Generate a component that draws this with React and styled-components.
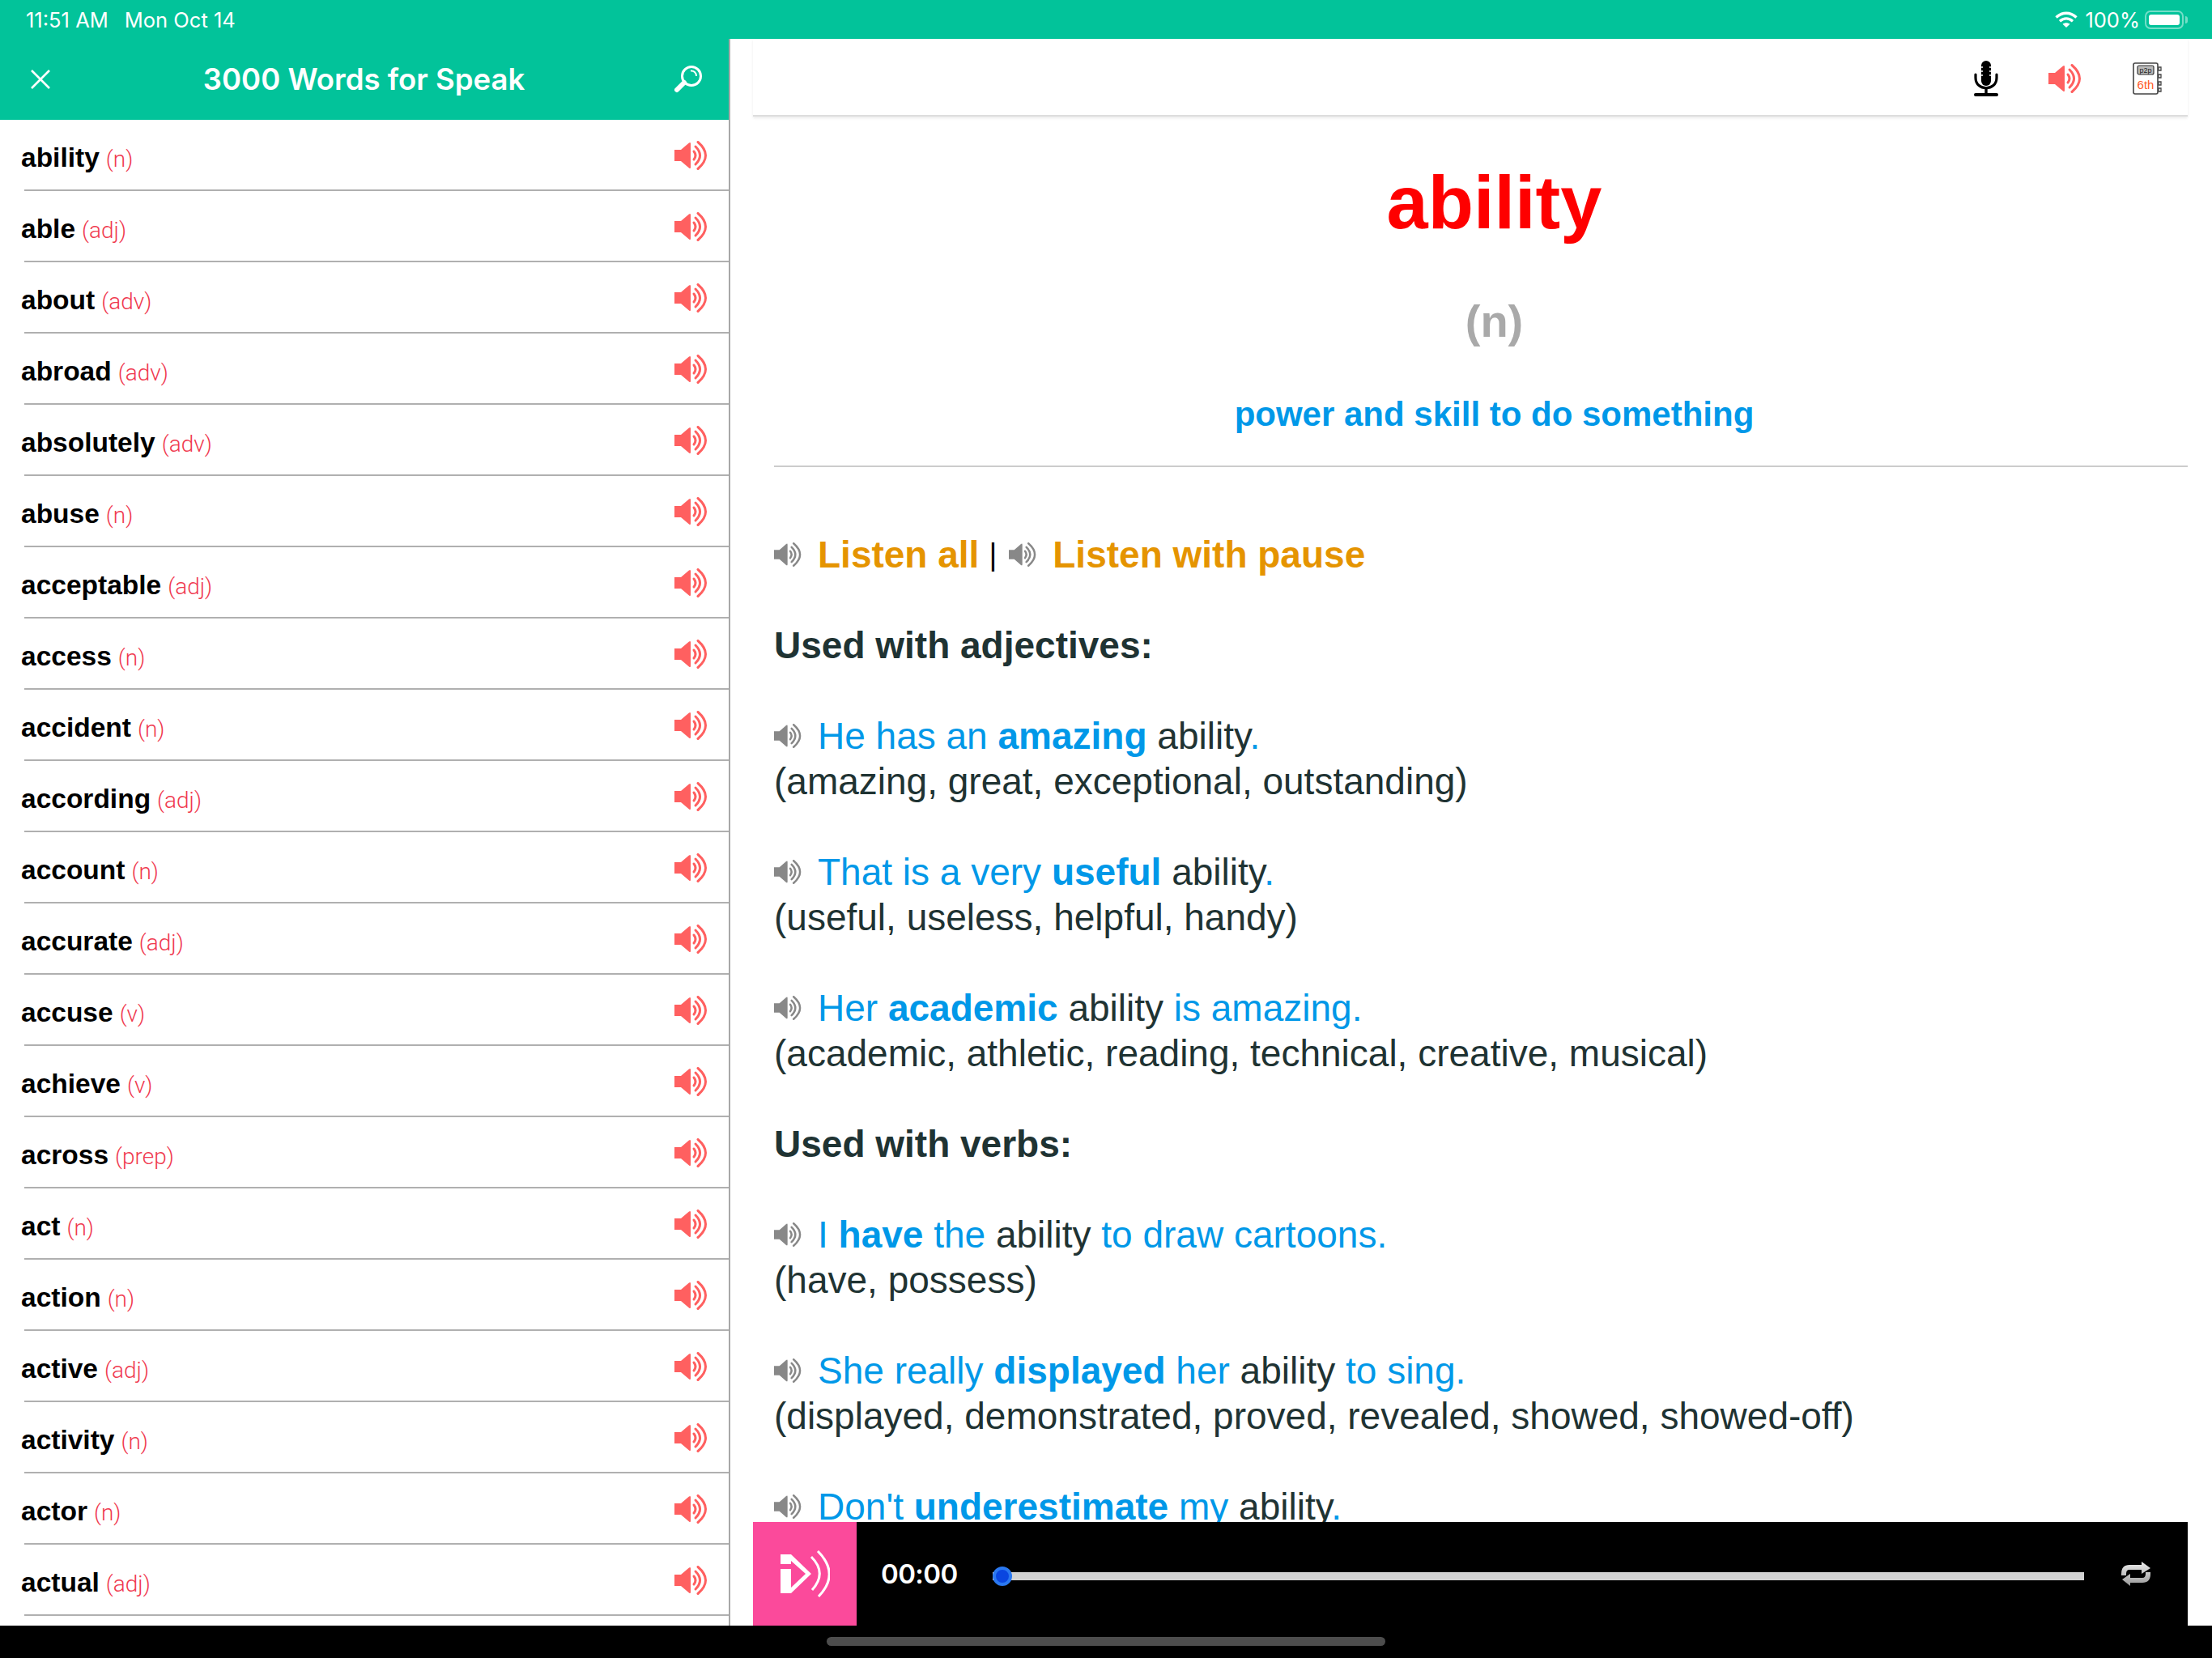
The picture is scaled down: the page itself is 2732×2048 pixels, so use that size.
import React from 'react'
import styled, { createGlobalStyle } from 'styled-components'

const Global = createGlobalStyle`
  html, body { margin: 0; padding: 0; background: #000; }
  * { box-sizing: border-box; }
`

const Page = styled.div`
  width: 2732px;
  height: 2048px;
  display: flex;
  flex-direction: column;
  overflow: hidden;
  background: #000;
  font-family: 'Liberation Sans', Arial, sans-serif;
`

const StatusBar = styled.div`
  height: 48px;
  flex: none;
  display: flex;
  align-items: center;
  justify-content: space-between;
  padding: 0 30px 0 32px;
  background: #02c39a;
  color: #fff;
  font-family: 'Inter', sans-serif;
  font-size: 25.5px;
`
const StatusGroup = styled.div`
  display: flex;
  align-items: center;
  gap: ${p => p.$gap || 9}px;
`

const Battery = styled.div`
  width: 48px;
  height: 23px;
  padding: 3px;
  margin-left: -3px;
  margin-right: 5px;
  border: 2px solid rgba(255, 255, 255, .45);
  border-radius: 7px;
  position: relative;
  &:before {
    content: '';
    display: block;
    height: 100%;
    background: #fff;
    border-radius: 3px;
  }
  &:after {
    content: '';
    position: absolute;
    right: -7px;
    top: 5px;
    width: 3px;
    height: 9px;
    background: rgba(255, 255, 255, .45);
    border-radius: 0 3px 3px 0;
  }
`

const Main = styled.div`
  flex: 1;
  min-height: 0;
  display: flex;
  background: #fff;
`

const Sidebar = styled.div`
  width: 902px;
  flex: none;
  display: flex;
  flex-direction: column;
  overflow: hidden;
  border-right: 2px solid #a8a8a8;
`

const SideHeader = styled.div`
  height: 100px;
  flex: none;
  display: flex;
  align-items: center;
  padding: 0 32px 0 38px;
  background: #02c39a;
  color: #fff;
`
const SideTitle = styled.div`
  flex: 1;
  text-align: center;
  font-family: 'Inter', sans-serif;
  font-weight: 600;
  font-size: 36.5px;
  padding-left: 4px;
`

const Row = styled.div`
  height: 88px;
  flex: none;
  margin-left: 30px;
  padding: 2px 25px 0 0;
  display: flex;
  align-items: center;
  justify-content: space-between;
  border-bottom: 2px solid #b0b0b0;
`
const RowWord = styled.div`
  margin-left: -4px;
  padding-top: 6px;
  font-size: 33.5px;
  font-weight: 700;
  color: #000;
  white-space: nowrap;
`
const Pos = styled.span`
  margin-left: 8px;
  font-family: 'Roboto', sans-serif;
  font-weight: 300;
  font-size: 28px;
  color: #f03a50;
`

const Detail = styled.div`
  flex: 1;
  min-width: 0;
  display: flex;
  flex-direction: column;
  padding: 0 30px 0 28px;
`

const Toolbar = styled.div`
  height: 96px;
  flex: none;
  display: flex;
  align-items: center;
  justify-content: flex-end;
  gap: 62px;
  padding: 4px 32px 0 0;
  border-bottom: 2px solid #ddd;
  box-shadow: 0 2px 3px rgba(0, 0, 0, .08);
`

const Content = styled.div`
  flex: 1;
  min-height: 0;
  overflow: hidden;
  padding-left: 26px;
`

const Title = styled.div`
  padding-left: 33px;
  text-align: center;
`
const Word = styled.div`
  margin-top: 53px;
  font-size: 92px;
  line-height: 106px;
  font-weight: 700;
  color: #fe0000;
`
const WordPos = styled.div`
  margin-top: 62px;
  font-size: 56px;
  line-height: 64px;
  font-weight: 700;
  color: #a9a9a9;
`
const Meaning = styled.div`
  margin-top: 55px;
  font-size: 42px;
  line-height: 56px;
  font-weight: 700;
  color: #0098e8;
`
const Rule = styled.div`
  margin-top: 35px;
  height: 2px;
  background: #ccc;
`

const ListenRow = styled.div`
  margin-top: 80px;
  margin-bottom: 56px;
  display: flex;
  align-items: center;
  height: 56px;
  font-size: 46px;
  font-weight: 700;
  color: #e59400;
`
const Sep = styled.span`
  margin: 0 15px 0 12px;
  font-size: 38px;
  font-weight: 400;
  color: #000;
`
const GraySpeaker = styled.span`
  display: inline-flex;
  margin-right: 19px;
  vertical-align: 1px;
`
const Heading = styled.div`
  margin-bottom: 56px;
  font-size: 46px;
  line-height: 56px;
  font-weight: 700;
  color: #1f3333;
`
const Example = styled.div`
  margin-bottom: 56px;
  font-size: 46px;
  line-height: 56px;
  color: #1f3333;
  white-space: nowrap;
`
const Sentence = styled.div`
  color: #0098e8;
  b { font-weight: 700; }
  i { font-style: normal; color: #1f3333; }
`

const Player = styled.div`
  height: 128px;
  flex: none;
  display: flex;
  align-items: center;
  background: #000;
  color: #fff;
`
const PlayButton = styled.div`
  width: 128px;
  height: 128px;
  flex: none;
  display: flex;
  align-items: center;
  justify-content: center;
  background: #fb4a9b;
`
const Time = styled.div`
  width: 93px;
  flex: none;
  margin: 0 45px 0 30px;
  font-family: 'Inter', sans-serif;
  font-weight: 600;
  font-size: 33px;
  letter-spacing: -.6px;
  white-space: nowrap;
`
const Track = styled.div`
  flex: 1;
  height: 10px;
  margin-top: 6px;
  background: #d2d2d2;
  position: relative;
`
const Thumb = styled.div`
  position: absolute;
  left: 0;
  top: -7px;
  width: 24px;
  height: 24px;
  border-radius: 50%;
  background: #0a46e0;
  border: 4px solid #2a78f0;
`
const Repeat = styled.div`
  margin: 0 45px;
  display: flex;
`

const HomeBar = styled.div`
  height: 40px;
  flex: none;
  display: flex;
  justify-content: center;
  padding-top: 14px;
  background: #000;
`
const HomePill = styled.div`
  width: 690px;
  height: 11px;
  border-radius: 6px;
  background: #4d4d4d;
`

const Speaker = ({ color, width = 42, height = 36 }) => (
  <svg width={width} height={height} viewBox="0 0 42 36" fill="none">
    <path d="M0 11H8L18 2.500Q20 1 20 3.500V32.500Q20 35 18 33.500L8 25H0Z" fill={color} />
    <g stroke={color} strokeWidth="3" strokeLinecap="round">
      <path d="M24 13Q28 18 24 23" />
      <path d="M26 7Q37 18 26 29" />
      <path d="M29 1.500Q48 18 29 34.500" />
    </g>
  </svg>
)

const GrayIcon = () => (
  <GraySpeaker><Speaker color="#888" width={35} height={30} /></GraySpeaker>
)

const words = [
  ['ability', 'n'], ['able', 'adj'], ['about', 'adv'], ['abroad', 'adv'], ['absolutely', 'adv'],
  ['abuse', 'n'], ['acceptable', 'adj'], ['access', 'n'], ['accident', 'n'], ['according', 'adj'],
  ['account', 'n'], ['accurate', 'adj'], ['accuse', 'v'], ['achieve', 'v'], ['across', 'prep'],
  ['act', 'n'], ['action', 'n'], ['active', 'adj'], ['activity', 'n'], ['actor', 'n'], ['actual', 'adj'],
]

const Ex = ({ children, note }) => (
  <Example>
    <Sentence><GrayIcon />{children}</Sentence>
    {note && <div>{note}</div>}
  </Example>
)

const App = () => (
  <Page>
    <Global />
    <StatusBar>
      <StatusGroup $gap={20}>
        <span>11:51 AM</span>
        <span>Mon Oct 14</span>
      </StatusGroup>
      <StatusGroup>
        <svg width="28" height="21" viewBox="0 0 28 21" fill="none" stroke="#fff" strokeWidth="3.4">
          <path d="M1.500 7.500C9 .5 19 .5 26.500 7.500" />
          <path d="M6 12.200C11 8 17 8 22 12.200" />
          <path d="M14 20L9.500 15.800C12 13.800 16 13.800 18.500 15.800Z" fill="#fff" stroke="none" />
        </svg>
        <span>100%</span>
        <Battery />
      </StatusGroup>
    </StatusBar>
    <Main>
      <Sidebar>
        <SideHeader>
          <svg width="24" height="24" viewBox="0 0 24 24" stroke="#fff" strokeWidth="2.6">
            <path d="M1 1L23 23M23 1L1 23" />
          </svg>
          <SideTitle>3000 Words for Speak</SideTitle>
          <svg width="35" height="34" viewBox="0 0 35 34" fill="none" stroke="#fff" strokeWidth="3">
            <circle cx="21" cy="13" r="11.500" />
            <path d="M20 6.500C24 6 27 9 27 13" strokeWidth="2" />
            <path d="M12 21L3 30" strokeWidth="6" strokeLinecap="round" />
          </svg>
        </SideHeader>
        {words.map(([w, pos]) => (
          <Row key={w}>
            <RowWord>{w}<Pos>({pos})</Pos></RowWord>
            <Speaker color="#ff6060" />
          </Row>
        ))}
      </Sidebar>
      <Detail>
        <Toolbar>
          <svg width="30" height="44" viewBox="0 0 30 44">
            <rect x="9" y="0" width="12" height="31" rx="6" fill="#000" />
            <path d="M7 8H11M7 13H11M7 18H11M19 8H23M19 13H23M19 18H23" stroke="#fff" strokeWidth="1.4" />
            <path d="M2 17V21C2 38 28 38 28 21V17" fill="none" stroke="#000" strokeWidth="3.2" strokeLinecap="round" />
            <path d="M15 34V41" stroke="#000" strokeWidth="3.4" />
            <rect x="0" y="40" width="30" height="4" rx="2" fill="#000" />
          </svg>
          <Speaker color="#ff6060" />
          <svg width="36" height="40" viewBox="0 0 36 40" fill="none">
            <rect x="1" y="1" width="30" height="38" rx="2" stroke="#444" strokeWidth="1.6" />
            <rect x="6" y="4" width="20" height="11" rx="2" fill="#bbb" stroke="#333" strokeWidth="1.2" />
            <text x="16" y="13" textAnchor="middle" fontFamily="Liberation Sans" fontSize="9" fill="#222">p2p</text>
            <text x="16" y="33" textAnchor="middle" fontFamily="Liberation Sans" fontSize="15" fill="#ff5a26">6th</text>
            <path d="M32 6h3v4h-3zM32 15h3v4h-3zM32 24h3v4h-3zM32 32h3v4h-3z" fill="#fff" stroke="#444" strokeWidth="1.3" />
          </svg>
        </Toolbar>
        <Content>
          <Title>
            <Word>ability</Word>
            <WordPos>(n)</WordPos>
            <Meaning>power and skill to do something</Meaning>
          </Title>
          <Rule />
          <ListenRow>
            <GrayIcon />
            Listen all
            <Sep>|</Sep>
            <GrayIcon />
            Listen with pause
          </ListenRow>
          <Heading>Used with adjectives:</Heading>
          <Ex note="(amazing, great, exceptional, outstanding)">He has an <b>amazing</b> <i>ability</i>.</Ex>
          <Ex note="(useful, useless, helpful, handy)">That is a very <b>useful</b> <i>ability</i>.</Ex>
          <Ex note="(academic, athletic, reading, technical, creative, musical)">Her <b>academic</b> <i>ability</i> is amazing.</Ex>
          <Heading>Used with verbs:</Heading>
          <Ex note="(have, possess)">I <b>have</b> the <i>ability</i> to draw cartoons.</Ex>
          <Ex note="(displayed, demonstrated, proved, revealed, showed, showed-off)">She really <b>displayed</b> her <i>ability</i> to sing.</Ex>
          <Ex>Don't <b>underestimate</b> my <i>ability</i>.</Ex>
        </Content>
        <Player>
          <PlayButton>
            <svg width="62" height="58" viewBox="0 0 62 58" fill="none">
              <path d="M1 5H14L39 29L14 53H1V23H14V17H1Z" fill="#fff" />
              <path d="M14 13V46L32 29Z" fill="#fb4a9b" />
              <path d="M39 8Q59 28 40 49" stroke="#fff" strokeWidth="3" />
              <path d="M47 1Q75 29 48 57" stroke="#fff" strokeWidth="3" />
            </svg>
          </PlayButton>
          <Time>00:00</Time>
          <Track><Thumb /></Track>
          <Repeat>
            <svg width="38" height="30" viewBox="0 0 38 30" fill="none">
              <defs>
                <linearGradient id="rep" gradientUnits="userSpaceOnUse" x1="0" y1="0" x2="0" y2="30">
                  <stop offset="0" stopColor="#ececec" />
                  <stop offset="1" stopColor="#9a9a9a" />
                </linearGradient>
              </defs>
              <path d="M4 17V15Q4 7 11 7H28" stroke="url(#rep)" strokeWidth="6" />
              <path d="M26 0L37 8L26 15Z" fill="url(#rep)" />
              <path d="M34 13V15Q34 23 27 23H10" stroke="url(#rep)" strokeWidth="6" />
              <path d="M12 15L2 22L12 30Z" fill="url(#rep)" />
            </svg>
          </Repeat>
        </Player>
      </Detail>
    </Main>
    <HomeBar><HomePill /></HomeBar>
  </Page>
)

export default App
